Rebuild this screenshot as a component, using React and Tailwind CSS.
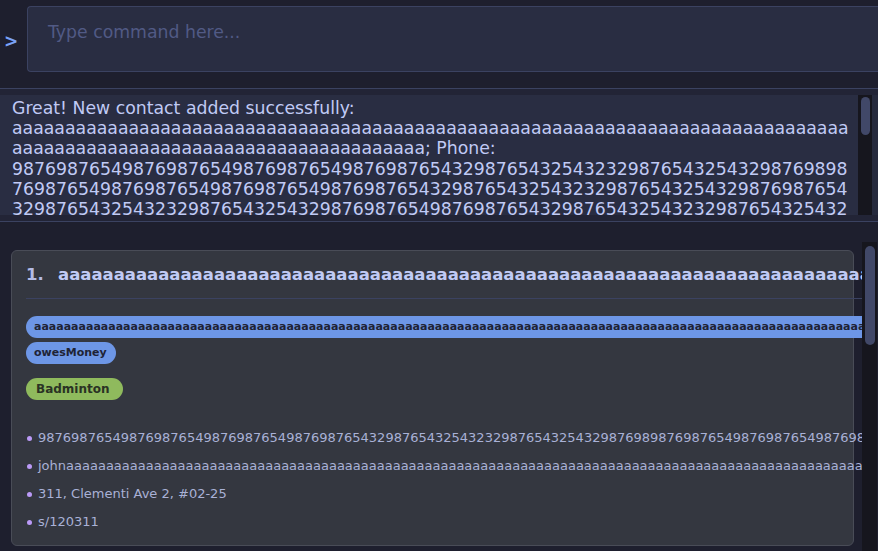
import React from 'react';

const NAME_1 = 'a'.repeat(79);
const NAME_2 = 'a'.repeat(39);
const PHONE_LINES = [
  '9876987654987698765498769876549876987654329876543254323298765432543298769898',
  '7698765498769876549876987654987698765432987654325432329876543254329876987654',
  '3298765432543232987654325432987698765498769876543298765432543232987654325432',
  '9876543254323298765432543298769876549876987654329876543254323298765432543298',
];
const PHONE = PHONE_LINES.join('');

const ResultBox = () => (
  <div className="h-[134px] border-y border-[#3b4261] bg-[#222436] pt-[6px] pb-[6px]">
    <div className="h-[120px] flex">
      {/* text */}
      <div className="w-[858px] h-full overflow-hidden bg-[#292d42] pl-[12px] pt-[3px] text-[17.3px] leading-[20.2px] text-[#c0caf5] whitespace-nowrap">
        <div>Great! New contact added successfully:</div>
        <div>{NAME_1}</div>
        <div>{NAME_2}; Phone:</div>
        {PHONE_LINES.map((line, i) => (
          <div key={i}>{line}</div>
        ))}
      </div>
      {/* scrollbar */}
      <div className="w-[14px] h-full bg-[#16161e] pt-[2px] pl-[3px]">
        <div className="w-[9px] h-[38px] rounded-full bg-[#414868]" />
      </div>
      <div className="flex-1 h-full bg-[#262a3d]" />
    </div>
  </div>
);

const Chip = ({ children, color, size }) => (
  <div className={`h-[22px] flex items-center rounded-full font-bold text-[#1f2335] whitespace-nowrap ${color} ${size}`}>
    {children}
  </div>
);

const Field = ({ children }) => (
  <div className="h-[28px] flex items-center whitespace-nowrap">
    <span className="w-[5px] h-[5px] rounded-full bg-[#bb9af7] mr-[6px] ml-[1px] shrink-0" />
    <span className="text-[13px] text-[#a9b1d6]">{children}</span>
  </div>
);

const PersonCard = () => (
  <div className="ml-[11px] w-[843px] h-[296px] shrink-0 rounded-[6px] border border-[#494c57] bg-[#343740] pl-[14px] pt-[14px]">
    <div className="flex items-baseline whitespace-nowrap text-[16.5px] leading-[19px] font-bold">
      <span className="inline-block shrink-0 w-[32px] text-[#b4bce6]">1.</span>
      <span className="text-[#c0caf5]">{'a'.repeat(90)}</span>
    </div>
    <div className="mt-[14px] h-px w-[860px] bg-[#3b4261]" />
    <div className="mt-[17px] flex flex-col items-start gap-[4px]">
      <Chip color="bg-[#6d96e6]" size="text-[11px] pl-[8px] pr-[8px]">{'a'.repeat(130)}</Chip>
      <Chip color="bg-[#6d96e6]" size="text-[11px] pl-[8px] pr-[9px]">owesMoney</Chip>
    </div>
    <div className="mt-[14px] flex">
      <Chip color="bg-[#8fba5d]" size="text-[12px] pl-[10px] pr-[13px] text-[#2a3324]">Badminton</Chip>
    </div>
    <div className="mt-[24px]">
      <Field>{PHONE}</Field>
      <Field>john{'a'.repeat(120)}</Field>
      <Field>311, Clementi Ave 2, #02-25</Field>
      <Field>s/120311</Field>
    </div>
  </div>
);

export default function App() {
  return (
    <div className="w-[878px] h-[551px] overflow-hidden bg-[#1e1f2e] font-['DejaVu_Sans',sans-serif] flex flex-col">
      {/* command box */}
      <div className="h-[88px] pt-[6px] flex items-start shrink-0">
        <div className="w-[27px] h-[66px] flex items-center pl-[4px] pt-[5px] text-[17px] font-bold text-[#7aa2f7]">&gt;</div>
        <div className="flex-1 h-[66px] rounded-l-[4px] border border-r-0 border-[#3b4261] bg-[#292d42] pl-[20px] pt-[15px] text-[17.3px] leading-[20px] text-[#515a85]">
          Type command here...
        </div>
      </div>

      <ResultBox />

      {/* person list */}
      <div className="flex-1 flex min-h-0">
        <div className="w-[862px] h-full overflow-hidden pt-[28px]">
          <PersonCard />
        </div>
        <div className="w-[15px] mt-[20px] bg-[#16161e] pt-[4px] pl-[3px]">
          <div className="w-[10px] h-[99px] rounded-full bg-[#414868]" />
        </div>
        <div className="flex-1" />
      </div>
    </div>
  );
}
